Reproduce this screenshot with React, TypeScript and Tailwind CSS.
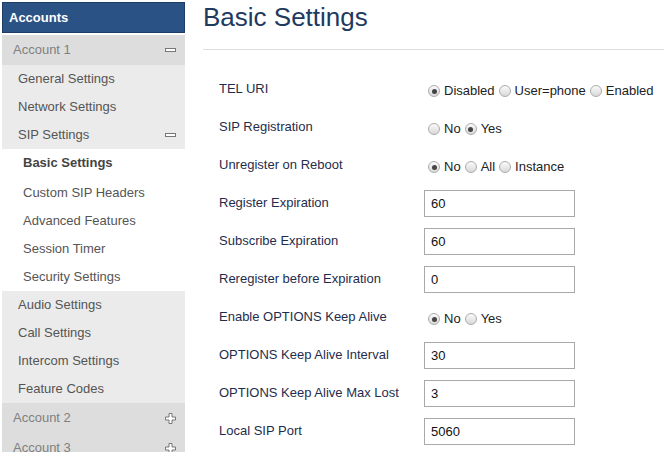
import React from "react";

type Opt = { label: string; checked?: boolean };

const Radio = ({ checked }: { checked?: boolean }) => (
  <span className="ml-[4px] mr-[4px] inline-flex h-[12px] w-[12px] shrink-0 items-center justify-center rounded-full border border-[#acacac] bg-gradient-to-b from-[#fafafa] to-[#d9d9d9]">
    {checked && <span className="h-[5px] w-[5px] rounded-full bg-[#444]" />}
  </span>
);

const RadioGroup = ({ options }: { options: Opt[] }) => (
  <div className="mt-[4px] flex items-center text-[13px] text-[#222]">
    {options.map((o) => (
      <label key={o.label} className="flex items-center">
        <Radio checked={o.checked} />
        <span>{o.label}</span>
      </label>
    ))}
  </div>
);

const Minus = () => (
  <svg width="11" height="4" viewBox="0 0 11 4" className="shrink-0">
    <rect x="0.5" y="0.5" width="10" height="3" fill="#fff" stroke="#777" />
  </svg>
);

const Plus = () => (
  <svg width="11" height="11" viewBox="0 0 11 11" className="shrink-0">
    <path
      d="M4 0.5 H7 V4 H10.5 V7 H7 V10.5 H4 V7 H0.5 V4 H4 Z"
      fill="#fff"
      stroke="#777"
    />
  </svg>
);

const subItems = ["General Settings", "Network Settings"];
const sipItems = [
  "Basic Settings",
  "Custom SIP Headers",
  "Advanced Features",
  "Session Timer",
  "Security Settings",
];
const moreItems = [
  "Audio Settings",
  "Call Settings",
  "Intercom Settings",
  "Feature Codes",
];

const rows: { label: string; radios?: Opt[]; value?: string }[] = [
  {
    label: "TEL URI",
    radios: [
      { label: "Disabled", checked: true },
      { label: "User=phone" },
      { label: "Enabled" },
    ],
  },
  {
    label: "SIP Registration",
    radios: [{ label: "No" }, { label: "Yes", checked: true }],
  },
  {
    label: "Unregister on Reboot",
    radios: [
      { label: "No", checked: true },
      { label: "All" },
      { label: "Instance" },
    ],
  },
  { label: "Register Expiration", value: "60" },
  { label: "Subscribe Expiration", value: "60" },
  { label: "Reregister before Expiration", value: "0" },
  {
    label: "Enable OPTIONS Keep Alive",
    radios: [{ label: "No", checked: true }, { label: "Yes" }],
  },
  { label: "OPTIONS Keep Alive Interval", value: "30" },
  { label: "OPTIONS Keep Alive Max Lost", value: "3" },
  { label: "Local SIP Port", value: "5060" },
];

export default function App() {
  return (
    <div className="flex h-[452px] w-[664px] overflow-hidden bg-white font-['Liberation_Sans',Arial,sans-serif]">
      {/* Sidebar */}
      <aside className="ml-[2px] mt-[2px] w-[183px] shrink-0">
        <div className="flex h-[31px] items-center border border-[#1d3c66] bg-[#2b5285] pl-[6px] text-[13px] font-bold text-white">
          Accounts
        </div>
        <div className="mt-[2px] flex h-[30px] items-center justify-between bg-[#dddddd] pl-[11px] pr-[9px] text-[13px] text-[#808080]">
          <span>Account 1</span>
          <Minus />
        </div>
        <div className="bg-[#ebebeb]">
          {subItems.map((s) => (
            <div
              key={s}
              className="flex h-[28px] items-center pl-[16px] text-[13px] text-[#555]"
            >
              {s}
            </div>
          ))}
          <div className="flex h-[28px] items-center justify-between pl-[16px] pr-[9px] text-[13px] text-[#555]">
            <span>SIP Settings</span>
            <Minus />
          </div>
        </div>
        <div className="bg-white">
          {sipItems.map((s, i) => (
            <div
              key={s}
              className={
                i === 0
                  ? "flex h-[30px] items-center pb-[2px] pl-[21px] text-[13px] font-bold text-[#444]"
                  : "flex h-[28px] items-center pl-[21px] text-[13px] text-[#555]"
              }
            >
              {s}
            </div>
          ))}
        </div>
        <div className="bg-[#ebebeb]">
          {moreItems.map((s) => (
            <div
              key={s}
              className="flex h-[28px] items-center pl-[16px] text-[13px] text-[#555]"
            >
              {s}
            </div>
          ))}
        </div>
        {["Account 2", "Account 3"].map((a) => (
          <div
            key={a}
            className="flex h-[30px] items-center justify-between bg-[#dddddd] pl-[11px] pr-[9px] text-[13px] text-[#808080]"
          >
            <span>{a}</span>
            <Plus />
          </div>
        ))}
      </aside>

      {/* Main */}
      <main className="ml-[18px] min-w-0 flex-1">
        <div className="border-b border-[#dddddd] pb-[17px] pt-[2px]">
          <h1 className="text-[26px] leading-[30px] text-[#1e3a5f]">
            Basic Settings
          </h1>
        </div>
        <div className="pl-[16px] pt-[20px]">
          {rows.map((r) => (
            <div key={r.label} className="flex h-[38px] items-center">
              <div className="w-[205px] shrink-0 text-[13px] text-[#1f2d4d]">
                {r.label}
              </div>
              {r.radios ? (
                <RadioGroup options={r.radios} />
              ) : (
                <input
                  readOnly
                  value={r.value}
                  className="h-[27px] w-[151px] border border-[#a9a9a9] px-[6px] text-[13px] text-[#111] outline-none"
                />
              )}
            </div>
          ))}
        </div>
      </main>
    </div>
  );
}
